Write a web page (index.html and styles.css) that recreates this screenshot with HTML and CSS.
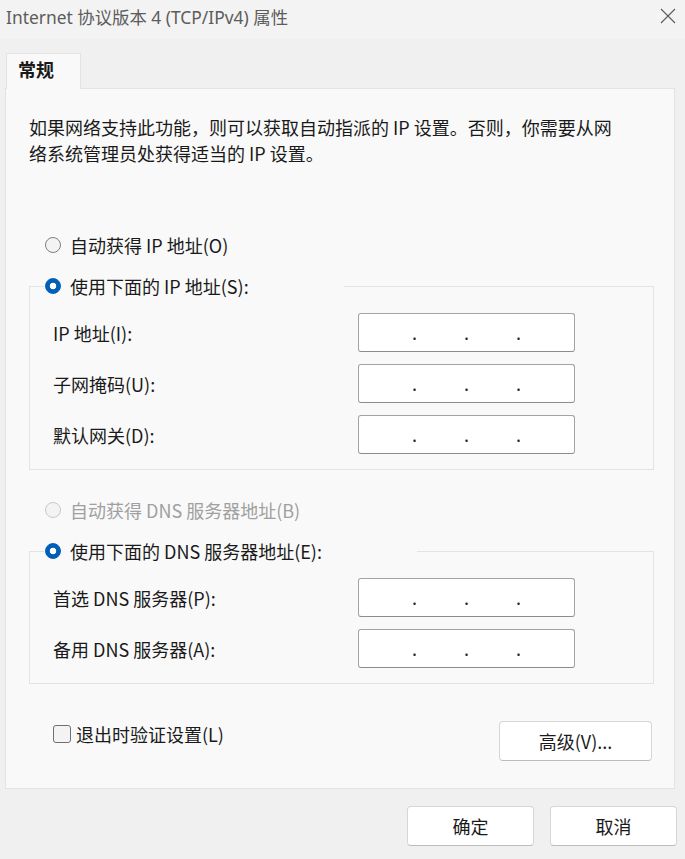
FILE: index.html
```html
<!DOCTYPE html>
<html lang="zh-CN">
<head>
    <meta charset="UTF-8">
    <title>Internet 协议版本 4 (TCP/IPv4) 属性</title>
    <link rel="stylesheet" href="styles.css">
</head>
<body>
<div class="titlebar">
    <span class="title">Internet 协议版本 4 (TCP/IPv4) 属性</span>
    <svg class="close" width="16" height="16" viewBox="0 0 16 16">
        <path d="M1 1L15 15M15 1L1 15" stroke="#5a5a5a" stroke-width="1.1" fill="none"/>
    </svg>
</div>
<div class="dialog">
    <div class="tabs">
        <div class="tab">常规</div>
    </div>
    <div class="panel">
        <p class="intro">如果网络支持此功能，则可以获取自动指派的 IP 设置。否则，你需要从网<br>络系统管理员处获得适当的 IP 设置。</p>

        <label class="radio loose"><span class="dot"></span>自动获得 IP 地址(O)</label>
        <fieldset class="group">
            <legend><label class="radio checked"><span class="dot"></span>使用下面的 IP 地址(S):</label></legend>
            <div class="rows">
                <div class="row"><span class="name">IP 地址(I):</span><div class="ipbox"><i>.</i><i>.</i><i>.</i></div></div>
                <div class="row"><span class="name">子网掩码(U):</span><div class="ipbox"><i>.</i><i>.</i><i>.</i></div></div>
                <div class="row"><span class="name">默认网关(D):</span><div class="ipbox"><i>.</i><i>.</i><i>.</i></div></div>
            </div>
        </fieldset>

        <label class="radio loose disabled"><span class="dot"></span>自动获得 DNS 服务器地址(B)</label>
        <fieldset class="group">
            <legend><label class="radio checked"><span class="dot"></span>使用下面的 DNS 服务器地址(E):</label></legend>
            <div class="rows">
                <div class="row"><span class="name">首选 DNS 服务器(P):</span><div class="ipbox"><i>.</i><i>.</i><i>.</i></div></div>
                <div class="row"><span class="name">备用 DNS 服务器(A):</span><div class="ipbox"><i>.</i><i>.</i><i>.</i></div></div>
            </div>
        </fieldset>

        <div class="panel-foot">
            <label class="check"><span class="box"></span>退出时验证设置(L)</label>
            <button class="btn">高级(V)...</button>
        </div>
    </div>
    <div class="actions">
        <button class="btn wide">确定</button>
        <button class="btn wide">取消</button>
    </div>
</div>
</body>
</html>
```

FILE: styles.css
```css
* {
    box-sizing: border-box;
}

body {
    margin: 0;
    width: 685px;
    height: 859px;
    overflow: hidden;
    background-color: #f0f0f0;
    font-family: "Noto Sans CJK SC", sans-serif;
    font-size: 18px;
    color: #1a1a1a;
}

.titlebar {
    height: 39px;
    background-color: #f3f3f3;
    display: flex;
    align-items: center;
    justify-content: space-between;
    padding: 0 9px 7px 6px;
}

.title {
    font-family: "Noto Sans", "Noto Sans CJK SC", sans-serif;
    font-size: 17.4px;
    color: #5c5c5c;
}

.dialog {
    padding: 14px 10px 0 5px;
}

.tabs {
    display: flex;
    padding-left: 1px;
}

.tab {
    position: relative;
    z-index: 1;
    width: 75px;
    height: 36px;
    margin-bottom: -1px;
    padding-left: 11px;
    line-height: 31px;
    font-weight: 600;
    background-color: #f9f9f9;
    border: 1px solid #e3e3e3;
    border-bottom: none;
}

.panel {
    height: 701px;
    padding: 25px 20px 0 23px;
    background-color: #f9f9f9;
    border: 1px solid #e3e3e3;
}

.intro {
    margin: 0 0 66px 0;
    line-height: 26px;
}

.radio {
    display: flex;
    align-items: center;
    height: 26px;
    line-height: 26px;
    white-space: nowrap;
}

.radio.loose {
    margin-left: 16px;
}

.dot {
    width: 16px;
    height: 16px;
    margin-right: 9px;
    border-radius: 50%;
    border: 1px solid #7f7f7f;
    background-color: #f3f3f3;
}

.radio.checked .dot {
    border-color: #005fb8;
    background: radial-gradient(circle, #fff 0 3px, #005fb8 3.6px);
}

.radio.disabled {
    color: #a0a0a0;
}

.radio.disabled .dot {
    border-color: #c8c8c8;
}

.radio.disabled + .group {
    margin-top: 15px;
}

.group {
    min-width: 0;
    margin: 15px 0 27px 0;
    padding: 0 0 15px 14px;
    border: 1px solid #e3e3e3;
}

.group legend {
    padding: 0 95px 0 1px;
}

.rows {
    display: flex;
    flex-direction: column;
    gap: 12px;
    padding: 14px 0 0 9px;
}

.row {
    display: flex;
    align-items: center;
}

.name {
    width: 305px;
}

.ipbox {
    width: 217px;
    height: 39px;
    display: flex;
    justify-content: center;
    align-items: center;
    gap: 46px;
    padding-bottom: 2px;
    background-color: #fff;
    border: 1px solid #a3a3a3;
    border-bottom-color: #8c8c8c;
    border-radius: 3px;
}

.ipbox i {
    width: 6px;
    font-style: normal;
    text-align: center;
    color: #222;
}

.group + .panel-foot {
    margin-top: 37px;
}

.panel-foot {
    display: flex;
    justify-content: space-between;
    align-items: flex-start;
    padding: 0 2px 0 24px;
}

.check {
    display: flex;
    align-items: center;
    height: 26px;
}

.box {
    width: 18px;
    height: 18px;
    margin-right: 5px;
    border: 1px solid #707070;
    border-radius: 3px;
    background-color: #f3f3f3;
}

.btn {
    width: 153px;
    height: 40px;
    padding: 0;
    font: inherit;
    color: #1a1a1a;
    background-color: #fff;
    border: 1px solid #d6d6d6;
    border-bottom-color: #bcbcbc;
    border-radius: 4px;
}

.actions {
    display: flex;
    justify-content: flex-end;
    gap: 16px;
    margin-right: -2px;
    padding-top: 17px;
}

.btn.wide {
    width: 127px;
}
```
